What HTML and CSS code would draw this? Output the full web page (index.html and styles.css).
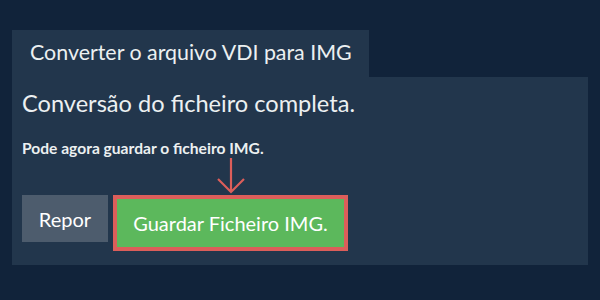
FILE: index.html
```html
<!DOCTYPE html>
<html lang="pt">

<head>
    <meta charset="UTF-8">
    <meta name="viewport" content="width=device-width, initial-scale=1.0">
    <title>Converter o arquivo VDI para IMG</title>
    <link rel="stylesheet" href="styles.css">
</head>

<body>
    <div class="tab">Converter o arquivo VDI para IMG</div>
    <div class="panel">
        <h1 class="done-title">Conversão do ficheiro completa.</h1>
        <p class="done-text">Pode agora guardar o ficheiro IMG.</p>
        <div class="actions">
            <button class="btn btn-reset">Repor</button>
            <div class="save-wrap">
                <!-- seta a apontar para o botão -->
                <svg class="arrow" width="30" height="38" viewBox="0 0 30 38">
                    <path d="M15 1 L15 35 M2 22 L15 35 L28 22" fill="none" stroke="#dc5e5a" stroke-width="2.2" />
                </svg>
                <button class="btn btn-save">Guardar Ficheiro IMG.</button>
            </div>
        </div>
    </div>
</body>

</html>
```

FILE: styles.css
```css
body {
    margin: 0;
    padding: 30px 12px 0;
    background-color: #11233a;
    color: #ecf0f1;
    font-family: Lato, "Open Sans", sans-serif;
}

.tab {
    display: inline-block;
    background-color: #22364c;
    height: 47px;
    line-height: 45px;
    padding: 0 17px 0 18px;
    font-size: 21.4px;
    vertical-align: top;
}

.panel {
    background-color: #22364c;
    padding: 8px 10px 14px;
}

.done-title {
    margin: 0;
    font-size: 23.6px;
    font-weight: normal;
    line-height: 36px;
}

.done-text {
    margin: 17px 0 0;
    font-size: 15.6px;
    font-weight: bold;
    line-height: 20px;
}

.actions {
    display: flex;
    align-items: flex-start;
    gap: 5px;
    margin-top: 37px;
}

.btn {
    border: none;
    color: #fff;
    font-family: Lato, "Open Sans", sans-serif;
    font-size: 20px;
    height: 47px;
    cursor: pointer;
}

.btn-reset {
    background-color: #4d5c6d;
    width: 86px;
}

.save-wrap {
    position: relative;
}

.arrow {
    position: absolute;
    left: 103px;
    top: -38px;
}

.btn-save {
    display: block;
    background-color: #5cb85c;
    width: 235px;
    height: 56px;
    border: 4.5px solid #dc5e5a;
    padding: 0;
}
```
